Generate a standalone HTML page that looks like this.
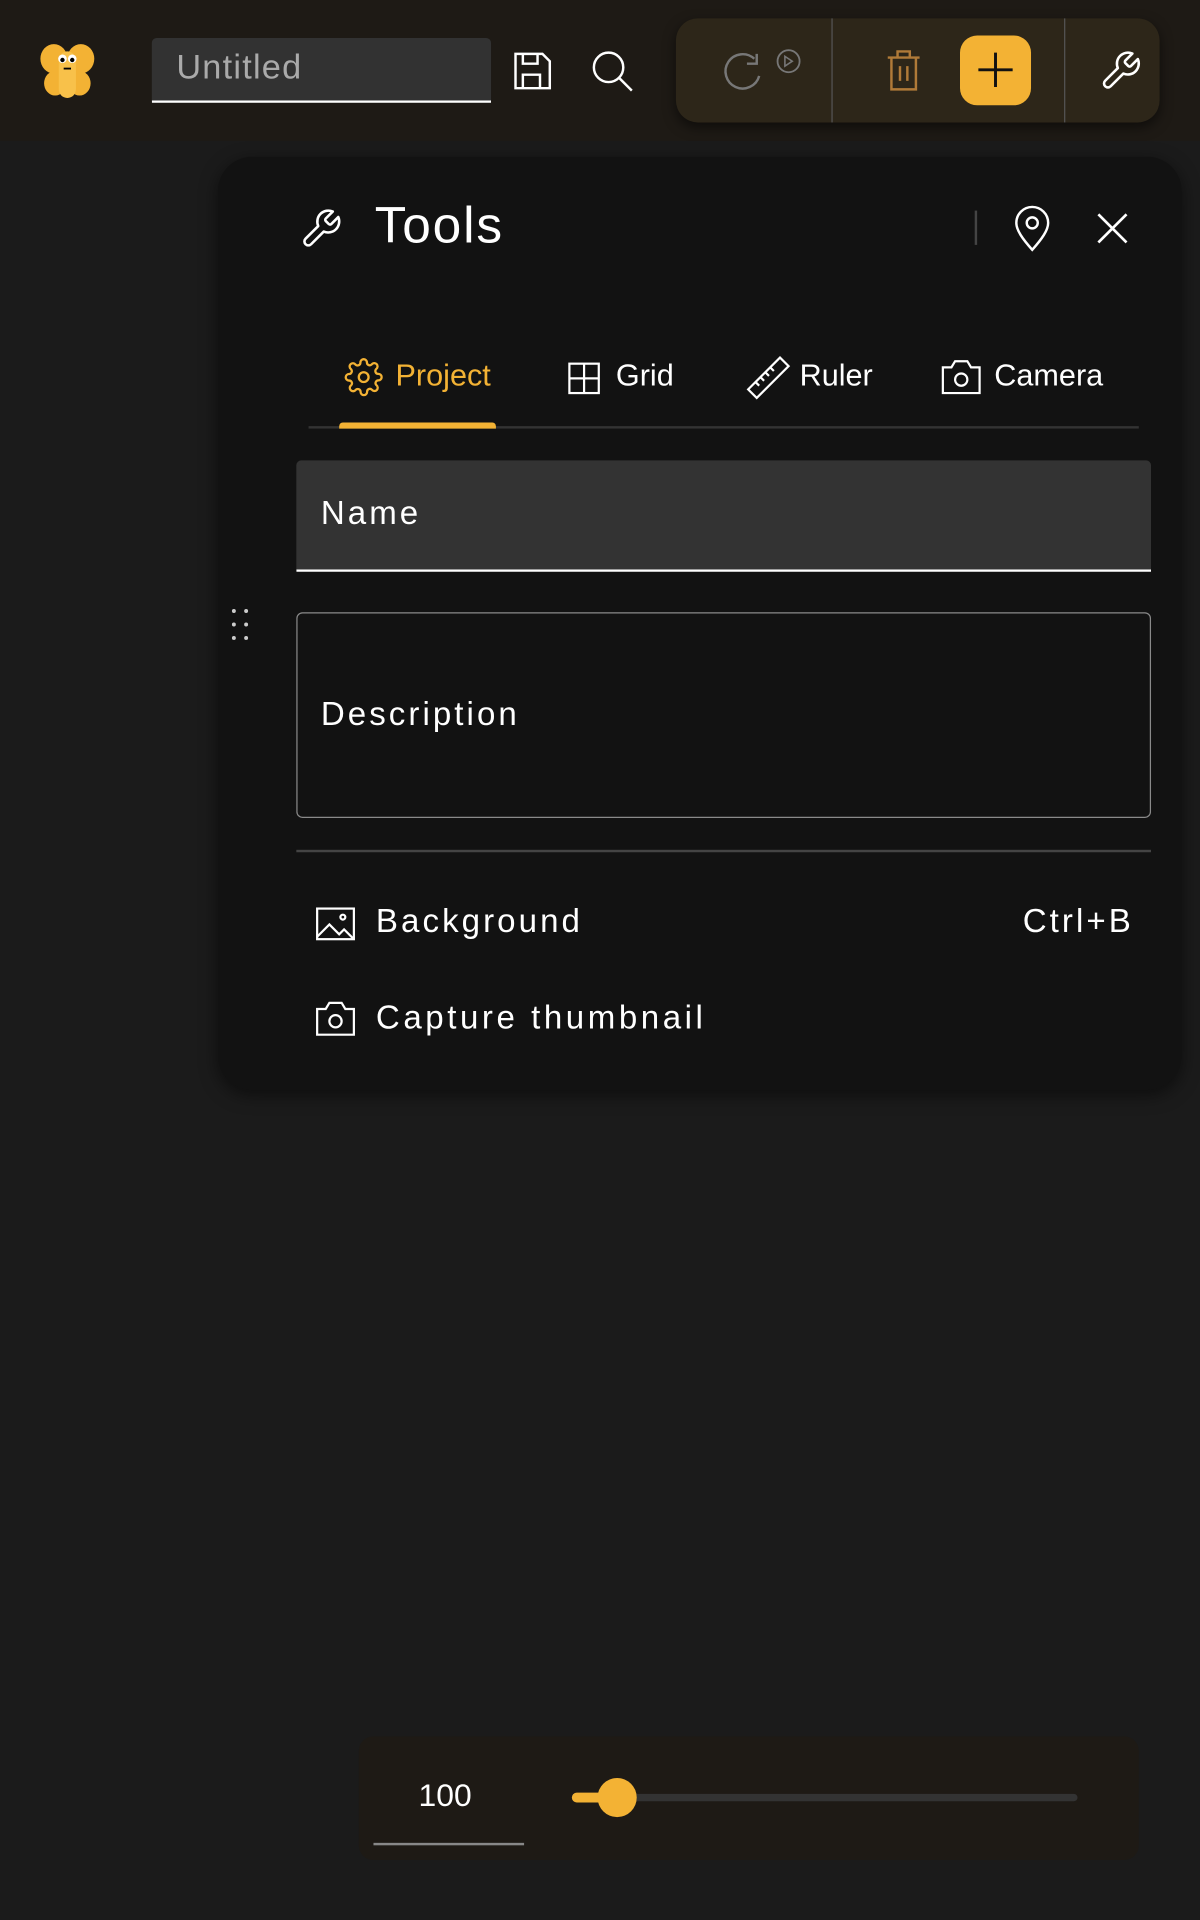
<!DOCTYPE html>
<html><head><meta charset="utf-8"><style>
*{box-sizing:border-box;margin:0;padding:0}
html,body{width:1200px;height:1920px;overflow:hidden;background:#1b1b1b}
#w{position:absolute;left:0;top:0;width:980px;height:1568px;transform:scale(1.2244898);transform-origin:0 0;font-family:"Liberation Sans",sans-serif;color:#fff}
.a{position:absolute}
svg{position:absolute;overflow:visible}
.t{position:absolute;white-space:nowrap;line-height:1}
.ls{letter-spacing:2.5px}
</style></head><body><div id="w">
<div class="a" style="left:0;top:0;width:980px;height:115px;background:#1e1a15"></div>
<svg style="left:30px;top:34px" width="50" height="48" viewBox="0 0 50 48">
<ellipse cx="14" cy="14" rx="11" ry="12" fill="#f3b234"/><ellipse cx="36" cy="14" rx="11" ry="12" fill="#f3b234"/>
<ellipse cx="15" cy="34" rx="9" ry="10" fill="#f3b234"/><ellipse cx="35" cy="34" rx="9" ry="10" fill="#f3b234"/>
<rect x="18" y="8" width="14" height="38" rx="7" fill="#f8c14a"/>
<circle cx="21" cy="14" r="3.5" fill="#fff"/><circle cx="29" cy="14" r="3.5" fill="#fff"/>
<circle cx="21" cy="15" r="1.8" fill="#000"/><circle cx="29" cy="15" r="1.8" fill="#000"/>
<path d="M22 22h6" stroke="#000" stroke-width="1.5"/></svg>
<div class="a" style="left:124px;top:31px;width:277px;height:53px;background:#323232;border-bottom:2px solid #fff;border-radius:4px 4px 0 0"></div>
<div class="t" style="left:144px;top:41px;font-size:28px;color:#aaa;letter-spacing:1px">Untitled</div>
<svg style="left:420px;top:43px" width="30" height="30" viewBox="0 0 30 30" fill="none" stroke="#fff" stroke-width="2"><path d="M1 1h22l6 6v22H1z"/><path d="M7 1v8h12V1M7 29V18h14v11"/></svg>
<svg style="left:483px;top:41px" width="34" height="34" viewBox="0 0 34 34" fill="none" stroke="#fff" stroke-width="2"><circle cx="14" cy="14" r="12"/><path d="M23 23l10 10"/></svg>
<div class="a" style="left:552px;top:15px;width:395px;height:85px;background:#2d2619;border-radius:18px;box-shadow:0 4px 10px rgba(0,0,0,.5)"></div>
<div class="a" style="left:679px;top:15px;width:1px;height:85px;background:#555"></div>
<div class="a" style="left:869px;top:15px;width:1px;height:85px;background:#555"></div>
<svg style="left:590px;top:40px" width="66" height="40" viewBox="0 0 66 40" fill="none" stroke="#777" stroke-width="2"><path d="M30 22a14 14 0 1 1-4-14"/><path d="M28 4v8h-8"/><circle cx="54" cy="10" r="9" stroke-width="1.5"/><path d="M51 6v8l6-4z" stroke-width="1.3"/></svg>
<svg style="left:724px;top:40px" width="28" height="34" viewBox="0 0 28 34" fill="none" stroke="#b07a38" stroke-width="2"><path d="M1 7h26M9 7V2h10v5M4 7v26h20V7M11 14v12M17 14v12"/></svg>
<div class="a" style="left:784px;top:29px;width:58px;height:57px;background:#f3b234;border-radius:14px"></div>
<svg style="left:799px;top:43px" width="28" height="28" viewBox="0 0 28 28" stroke="#111" stroke-width="2.4"><path d="M14 0v28M0 14h28"/></svg>
<svg style="left:897px;top:40px" width="36" height="36" viewBox="0 0 24 24" fill="none" stroke="#fff" stroke-width="1.4" stroke-linejoin="round"><path d="M14.7 6.3a1 1 0 0 0 0 1.4l1.6 1.6a1 1 0 0 0 1.4 0l3.8-3.8a6 6 0 0 1-7.9 7.9l-6.9 6.9a2.1 2.1 0 0 1-3-3l6.9-6.9a6 6 0 0 1 7.9-7.9z"/></svg>
<div class="a" style="left:178px;top:128px;width:787px;height:762px;background:#121212;border-radius:28px;box-shadow:0 4px 14px rgba(0,0,0,.5)"></div>
<svg style="left:244px;top:169px" width="36" height="36" viewBox="0 0 24 24" fill="none" stroke="#fff" stroke-width="1.4" stroke-linejoin="round"><path d="M14.7 6.3a1 1 0 0 0 0 1.4l1.6 1.6a1 1 0 0 0 1.4 0l3.8-3.8a6 6 0 0 1-7.9 7.9l-6.9 6.9a2.1 2.1 0 0 1-3-3l6.9-6.9a6 6 0 0 1 7.9-7.9z"/></svg>
<div class="t" style="left:306px;top:163px;font-size:42px;letter-spacing:1.5px">Tools</div>
<div class="a" style="left:796px;top:172px;width:2px;height:28px;background:#444"></div>
<svg style="left:829px;top:169px" width="28" height="36" viewBox="0 0 28 36" fill="none" stroke="#fff" stroke-width="2"><path d="M14 35C6 26 1 19 1 13a13 13 0 0 1 26 0c0 6-5 13-13 22z"/><circle cx="14" cy="13" r="4.5"/></svg>
<svg style="left:896px;top:174px" width="25" height="25" viewBox="0 0 25 25" stroke="#fff" stroke-width="2.2"><path d="M1 1l23 23M24 1L1 24"/></svg>
<svg style="left:281px;top:292px" width="32" height="32" viewBox="0 0 24 24" fill="none" stroke="#f3b234" stroke-width="1.4"><circle cx="12" cy="12" r="3"/><path d="M19.4 15a1.7 1.7 0 0 0 .3 1.8l.1.1a2 2 0 1 1-2.8 2.8l-.1-.1a1.7 1.7 0 0 0-1.8-.3 1.7 1.7 0 0 0-1 1.5V21a2 2 0 1 1-4 0v-.1a1.7 1.7 0 0 0-1.1-1.5 1.7 1.7 0 0 0-1.8.3l-.1.1a2 2 0 1 1-2.8-2.8l.1-.1a1.7 1.7 0 0 0 .3-1.8 1.7 1.7 0 0 0-1.500-1H3a2 2 0 1 1 0-4h.1a1.7 1.7 0 0 0 1.5-1.1 1.7 1.7 0 0 0-.3-1.8l-.1-.1a2 2 0 1 1 2.8-2.8l.1.1a1.7 1.7 0 0 0 1.8.3H9a1.7 1.7 0 0 0 1-1.5V3a2 2 0 1 1 4 0v.1a1.7 1.7 0 0 0 1 1.5 1.7 1.7 0 0 0 1.8-.3l.1-.1a2 2 0 1 1 2.8 2.8l-.1.1a1.7 1.7 0 0 0-.3 1.8V9a1.7 1.7 0 0 0 1.5 1H21a2 2 0 1 1 0 4h-.1a1.7 1.7 0 0 0-1.5 1z"/></svg>
<div class="t" style="left:323px;top:295px;font-size:25px;color:#f3b234">Project</div>
<svg style="left:464px;top:296px" width="26" height="26" viewBox="0 0 26 26" fill="none" stroke="#fff" stroke-width="1.8"><rect x="1" y="1" width="24" height="24"/><path d="M13 1v24M1 13h24"/></svg>
<div class="t" style="left:503px;top:295px;font-size:25px">Grid</div>
<svg style="left:610px;top:291px" width="35" height="35" viewBox="0 0 35 35" fill="none" stroke="#fff" stroke-width="1.8"><path d="M1 27L27 1l7 7L8 34z"/><path d="M7 21l3 3M11 17l3 3M15 13l3 3M19 9l3 3"/></svg>
<div class="t" style="left:653px;top:295px;font-size:25px">Ruler</div>
<svg style="left:769px;top:294px" width="32" height="28" viewBox="0 0 32 28" fill="none" stroke="#fff" stroke-width="1.8"><path d="M1 6h7l3-5h10l3 5h7v21H1z"/><circle cx="16" cy="16" r="5"/></svg>
<div class="t" style="left:812px;top:295px;font-size:25px">Camera</div>
<div class="a" style="left:252px;top:348px;width:678px;height:2px;background:#333"></div>
<div class="a" style="left:277px;top:345px;width:128px;height:5px;background:#f3b234;border-radius:3px 3px 0 0"></div>
<div class="a" style="left:242px;top:376px;width:698px;height:91px;background:#333;border-bottom:2px solid #fff;border-radius:4px 4px 0 0"></div>
<div class="t ls" style="left:262px;top:406px;font-size:27px">Name</div>
<svg style="left:189px;top:497px" width="16" height="26" viewBox="0 0 16 26" fill="#ccc"><circle cx="2" cy="2" r="1.6"/><circle cx="12" cy="2" r="1.6"/><circle cx="2" cy="13" r="1.6"/><circle cx="12" cy="13" r="1.6"/><circle cx="2" cy="24" r="1.6"/><circle cx="12" cy="24" r="1.6"/></svg>
<div class="a" style="left:242px;top:500px;width:698px;height:168px;border:1.5px solid #8a8a8a;border-radius:5px"></div>
<div class="t ls" style="left:262px;top:570px;font-size:27px">Description</div>
<div class="a" style="left:242px;top:694px;width:698px;height:1.5px;background:#444"></div>
<svg style="left:258px;top:741px" width="32" height="27" viewBox="0 0 32 27" fill="none" stroke="#fff" stroke-width="1.8"><rect x="1" y="1" width="30" height="25"/><path d="M1 24l10-10 8 8 4-4 8 8"/><circle cx="22" cy="8" r="2"/></svg>
<div class="t ls" style="left:307px;top:739px;font-size:27px">Background</div>
<div class="t ls" style="right:54px;top:739px;font-size:27px">Ctrl+B</div>
<svg style="left:258px;top:818px" width="32" height="28" viewBox="0 0 32 28" fill="none" stroke="#fff" stroke-width="1.8"><path d="M1 6h7l3-5h10l3 5h7v21H1z"/><circle cx="16" cy="16" r="5"/></svg>
<div class="t" style="left:307px;top:818px;font-size:27px;letter-spacing:2.9px">Capture thumbnail</div>
<div class="a" style="left:293px;top:1418px;width:637px;height:101px;background:#1e1a15;border-radius:12px"></div>
<div class="t" style="left:302px;top:1453px;width:123px;text-align:center;font-size:26px">100</div>
<div class="a" style="left:305px;top:1505px;width:123px;height:1.5px;background:#888"></div>
<div class="a" style="left:467px;top:1465px;width:413px;height:6px;background:#333;border-radius:3px"></div>
<div class="a" style="left:467px;top:1464px;width:37px;height:8px;background:#f3b234;border-radius:4px"></div>
<div class="a" style="left:488px;top:1452px;width:32px;height:32px;background:#f3b234;border-radius:50%"></div>
</div></body></html>
